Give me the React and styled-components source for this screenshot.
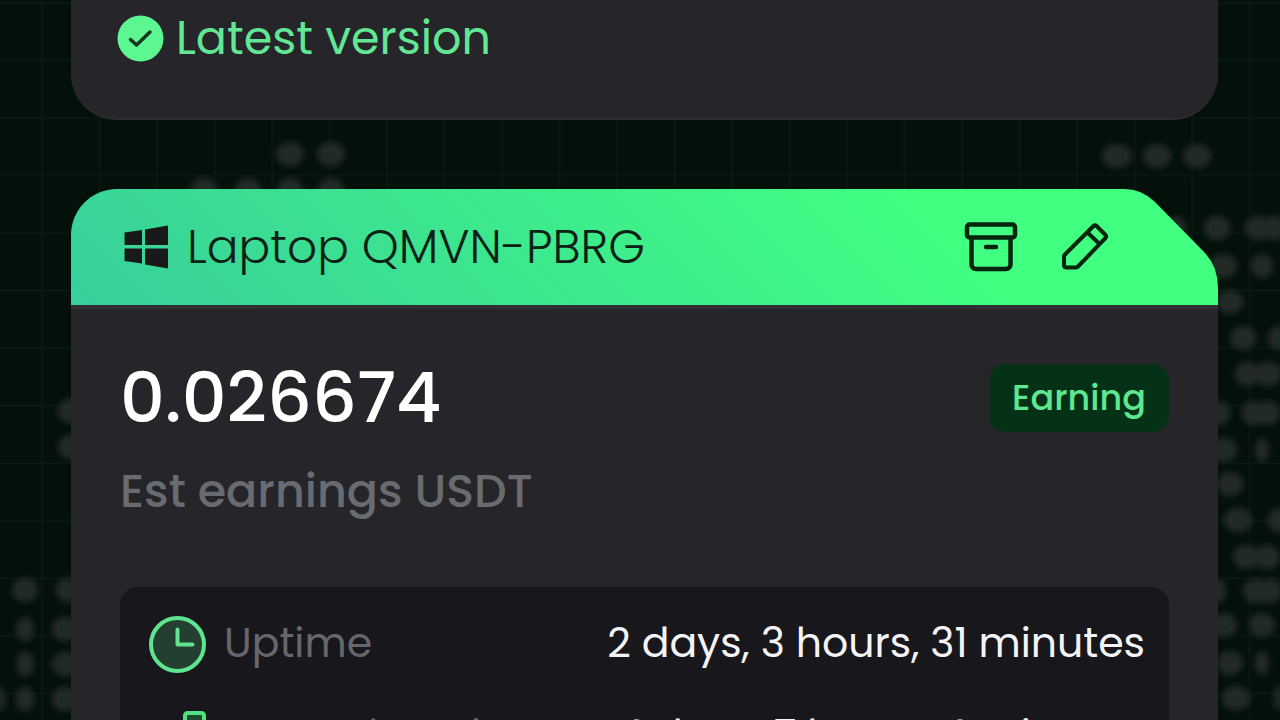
import React from 'react';
import styled, { createGlobalStyle } from 'styled-components';

const GlobalStyle = createGlobalStyle`
  body {
    margin: 0;
    min-height: 100vh;
    background: #04110b;
    color: #fff;
    font-family: Poppins, Inter, "Open Sans", sans-serif;
    overflow: hidden;
  }

  *, *::before, *::after {
    box-sizing: border-box;
  }
`

const Page = styled.main`
  position: relative;
  isolation: isolate;
  height: 100vh;
  overflow: hidden;
  padding: 0 62px 0 71px;
  display: flex;
  flex-direction: column;
  gap: 69px;
`

const Backdrop = styled.svg`
  position: absolute;
  inset: 0;
  width: 100%;
  height: 100%;
  z-index: -1;
`

const VersionCard = styled.section`
  display: flex;
  align-items: center;
  gap: 12px;
  padding: 8px 46px 50px;
  background: #262529;
  border-bottom: 2px solid #2d2c30;
  border-radius: 0 0 46px 46px;
  color: #62e795;
  font-size: 46px;
  line-height: 60px;
`

const DeviceCard = styled.section`
  flex: none;
  display: flex;
  flex-direction: column;
`

const CardHeader = styled.header`
  position: relative;
  isolation: isolate;
  display: flex;
  align-items: center;
  height: 116px;
  padding: 0 108px 0 52px;
  color: #0c2015;
`

const HeaderShape = styled.svg`
  position: absolute;
  inset: 0;
  width: 100%;
  height: 100%;
  z-index: -1;
`

const DeviceName = styled.h2`
  flex: 1;
  margin: 0 0 0 18px;
  font-size: 47px;
  font-weight: 300;
  line-height: 60px;
`

const IconButton = styled.button`
  display: flex;
  padding: 0;
  margin-left: 42px;
  border: 0;
  background: none;
  color: #05250f;
  cursor: pointer;
`

const CardBody = styled.div`
  padding: 51px 49px 40px;
  background: #262529;
  border-top: 4px solid #302f33;
`

const EarningsRow = styled.div`
  display: flex;
  align-items: flex-start;
  justify-content: space-between;
`

const Amount = styled.div`
  font-size: 70px;
  font-weight: 500;
  line-height: 76px;
`

const Caption = styled.div`
  margin-top: 27px;
  color: #686b70;
  font-size: 46px;
  font-weight: 500;
  line-height: 56px;
`

const Status = styled.span`
  margin-top: 4px;
  padding: 0 23px;
  border-radius: 16px;
  background: #053216;
  color: #5fe690;
  font-size: 35px;
  font-weight: 500;
  line-height: 68px;
`

const Stats = styled.dl`
  display: grid;
  gap: 35px;
  margin: 68px 0 0;
  padding: 29px 24px 29px 29px;
  border-radius: 18px;
  background: #18171b;
`

const Stat = styled.div`
  display: flex;
  align-items: center;
  height: 57px;

  dt, dd {
    padding-bottom: 4px;
    font-size: 41px;
    line-height: 56px;
  }

  dt {
    flex: 1;
    margin-left: 18px;
    color: #66666b;
  }

  dd {
    margin: 0;
    color: #f4f4f6;
  }
`

// [y, [[x, rx], ...]] for each row of lit map dots
const mapDots = [
  [154, [[290, 14], [331, 14]]],
  [190, [[204, 13], [248, 13], [290, 13], [331, 13]]],
  [156, [[1117, 15], [1157, 14], [1197, 14]]],
  [228, [[1176, 10], [1217, 13], [1258, 13], [1274, 12]]],
  [266, [[1223, 14], [1262, 11]]],
  [302, [[1230, 13]]],
  [338, [[1243, 13], [1278, 10]]],
  [374, [[1247, 12], [1268, 14]]],
  [413, [[1220, 10], [1254, 12], [1268, 12]]],
  [450, [[1224, 13], [1262, 7]]],
  [484, [[1230, 13]]],
  [520, [[1238, 14], [1278, 10]]],
  [557, [[1246, 13], [1267, 13]]],
  [591, [[1218, 8], [1256, 13], [1270, 12]]],
  [625, [[1224, 13], [1262, 13]]],
  [663, [[1230, 13], [1262, 7]]],
  [698, [[1236, 14], [1279, 5]]],
  [411, [[70, 12]]],
  [447, [[70, 12]]],
  [590, [[25, 13], [68, 12]]],
  [629, [[25, 9], [65, 13]]],
  [664, [[25, 9], [65, 13]]],
  [699, [[25, 9], [65, 13], [0, 5]]],
]

const MapBackdrop = () => (
  <Backdrop aria-hidden="true">
    <defs>
      <pattern id="grid" x="43" y="4" width="57.5" height="57.5" patternUnits="userSpaceOnUse">
        <path d="M57 0V57.5M0 57H57.5" fill="none" stroke="#081a12" strokeWidth="2" />
      </pattern>
      <filter id="soften">
        <feGaussianBlur stdDeviation="3" />
      </filter>
    </defs>
    <rect width="100%" height="100%" fill="url(#grid)" />
    <g fill="#202a25" filter="url(#soften)">
      {mapDots.map(([y, dots]) => dots.map(([x, rx]) => (
        <ellipse key={`${x}-${y}`} cx={x} cy={y} rx={rx} ry="12" />
      )))}
    </g>
  </Backdrop>
)

const CheckIcon = () => (
  <svg width="47" height="47" viewBox="0 0 47 47" aria-hidden="true">
    <circle cx="23.5" cy="23.5" r="23" fill="#5df792" />
    <path d="M13.5 24.5l6 5.5 13.5-13" fill="none" stroke="#12351f" strokeWidth="3.5" strokeLinecap="round" strokeLinejoin="round" />
  </svg>
)

const WindowsIcon = () => (
  <svg width="46" height="46" viewBox="0 0 46 46" fill="#171a19" aria-hidden="true">
    <path d="M1.5 8.5L19 6V21H1.5zM22 5.5L45 1.5V21H22zM1.5 24.5H19V39.5L1.5 37zM22 24.5H45V44.5L22 40.5z" />
  </svg>
)

const ArchiveIcon = () => (
  <svg width="54" height="50" viewBox="0 0 54 50" fill="none" stroke="currentColor" strokeWidth="4.5" strokeLinecap="round" strokeLinejoin="round" aria-hidden="true">
    <rect x="3" y="2.5" width="48" height="13" rx="2.5" />
    <path d="M7.5 16V42.5a4.5 4.5 0 0 0 4.5 4.5H42A4.5 4.5 0 0 0 46.5 42.5V16M22 25H32" />
  </svg>
)

const PencilIcon = () => (
  <svg width="50" height="50" viewBox="0 0 50 50" fill="none" stroke="currentColor" strokeWidth="4" strokeLinecap="round" strokeLinejoin="round" aria-hidden="true">
    <path d="M4.5 33L33.5 4Q35 2.5 36.5 4L45.5 13Q47 14.5 45.5 16L18 44.5Q17 45.5 15.5 45.5H6.5Q4 45.5 4 43V35Q4 33.5 4.5 33zM27.5 10.5L39.5 22" />
  </svg>
)

const ClockIcon = () => (
  <svg width="57" height="57" viewBox="0 0 57 57" fill="none" stroke="#5fe58f" strokeWidth="4" strokeLinecap="round" strokeLinejoin="round" aria-hidden="true">
    <circle cx="28.5" cy="28.5" r="26.5" fill="#243e2f" />
    <path d="M28.5 13.5V28.5H43.5" />
  </svg>
)

const NetworkIcon = () => (
  <svg width="57" height="57" viewBox="0 0 57 57" fill="#1c4a2c" stroke="#4fe282" strokeWidth="4" strokeLinejoin="round" aria-hidden="true">
    <path d="M3 36Q3 34 5 34H19V54H5Q3 54 3 52z" />
    <path d="M19 22Q19 20 21 20H36V54H19z" />
    <path d="M36 8Q36 5 39 5H52Q55 5 55 8V52Q55 54 53 54H36z" />
  </svg>
)

const stats = [
  { label: 'Uptime', value: '2 days, 3 hours, 31 minutes', Icon: ClockIcon },
  { label: 'Network Uptime', value: '4 days, 7 hours, 4 minutes', Icon: NetworkIcon },
]

function App() {
  return (
    <Page>
      <GlobalStyle />
      <MapBackdrop />
      <VersionCard>
        <CheckIcon />
        <span>Latest version</span>
      </VersionCard>
      <DeviceCard>
        <CardHeader>
          <HeaderShape viewBox="0 0 1147 116" preserveAspectRatio="none" aria-hidden="true">
            <defs>
              <linearGradient id="header" gradientUnits="userSpaceOnUse" x1="0" y1="116" x2="480" y2="-364">
                <stop offset="0" stopColor="#38cf9b" />
                <stop offset="1" stopColor="#41ff81" />
              </linearGradient>
            </defs>
            <path d="M0 116V46A46 46 0 0 1 46 0H1053Q1071 0 1084 13L1133 63Q1147 77 1147 99V116z" fill="url(#header)" />
          </HeaderShape>
          <WindowsIcon />
          <DeviceName>Laptop QMVN-PBRG</DeviceName>
          <IconButton aria-label="Archive device"><ArchiveIcon /></IconButton>
          <IconButton aria-label="Rename device"><PencilIcon /></IconButton>
        </CardHeader>
        <CardBody>
          <EarningsRow>
            <Amount>0.026674</Amount>
            <Status>Earning</Status>
          </EarningsRow>
          <Caption>Est earnings USDT</Caption>
          <Stats>
            {
              stats.map(({ label, value, Icon }) => (
                <Stat key={label}>
                  <Icon />
                  <dt>{label}</dt>
                  <dd>{value}</dd>
                </Stat>
              ))
            }
          </Stats>
        </CardBody>
      </DeviceCard>
    </Page>
  );
}

export default App;
